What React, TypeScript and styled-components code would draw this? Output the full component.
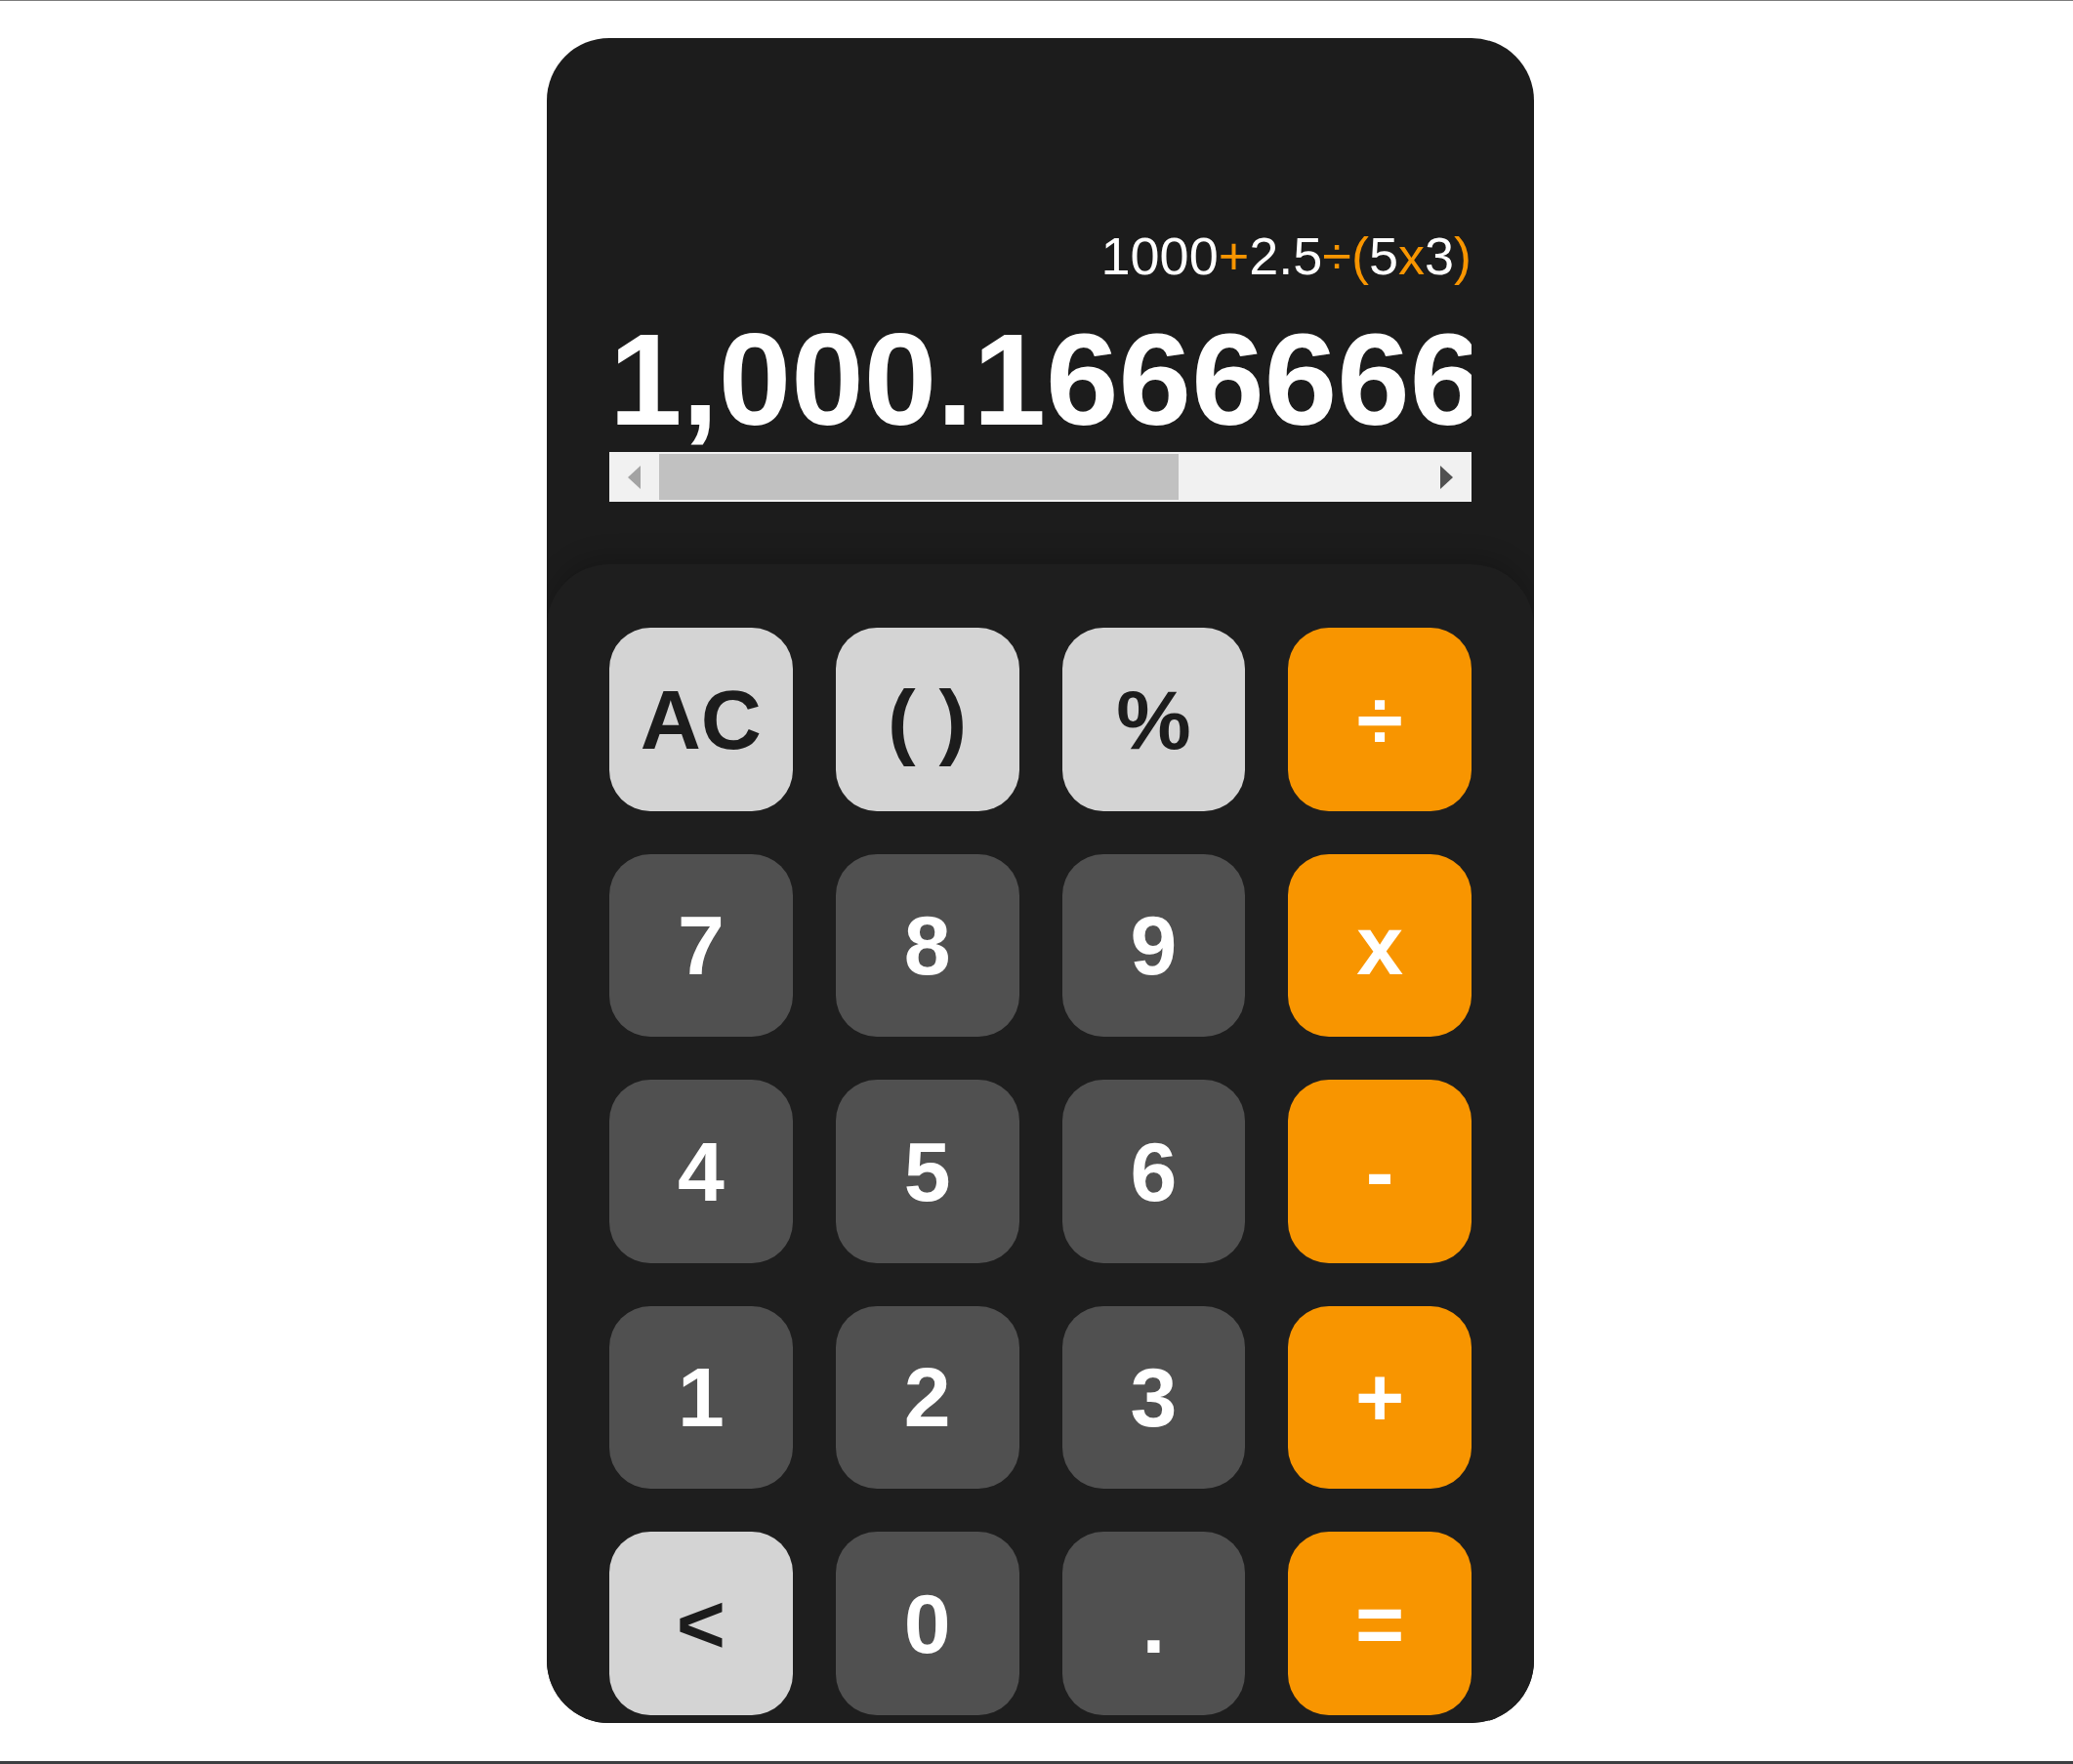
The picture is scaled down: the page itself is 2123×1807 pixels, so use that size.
import React from "react";
import styled, { createGlobalStyle } from "styled-components";

const GlobalStyle = createGlobalStyle`
  html, body {
    margin: 0;
    padding: 0;
    background: #ffffff;
  }
  body {
    font-family: "Liberation Sans", Arial, sans-serif;
  }
  * { box-sizing: border-box; }
`;

const Page = styled.div`
  min-height: 100vh;
  display: flex;
  justify-content: center;
  align-items: flex-start;
  padding: 38px 0 0 8px;
  border-top: 1px solid #7d7d7d;
  border-bottom: 3px solid #3c3f41;
`;

const Calculator = styled.div`
  width: 1011px;
  background: #1c1c1c;
  border-radius: 64px;
  overflow: hidden;
  display: flex;
  flex-direction: column;
`;

const Display = styled.div`
  display: flex;
  flex-direction: column;
  align-items: stretch;
  padding: 192px 64px 64px;
`;

const Expression = styled.div`
  font-family: "Liberation Sans", Arial, sans-serif;
  font-size: 54px;
  line-height: 62px;
  height: 62px;
  color: #ffffff;
  text-align: right;
  white-space: nowrap;
`;

const Op = styled.span`
  color: #f89500;
`;

const Result = styled.div`
  margin-top: 29px;
  font-family: "Liberation Sans", Arial, sans-serif;
  font-weight: 700;
  font-size: 134px;
  line-height: 134px;
  height: 134px;
  color: #ffffff;
  white-space: nowrap;
  overflow: hidden;
`;

const ScrollBar = styled.div`
  margin-top: 7px;
  height: 51px;
  display: flex;
  background: #f1f1f1;
`;

const ArrowBox = styled.div`
  width: 51px;
  flex: 0 0 51px;
  display: flex;
  align-items: center;
  justify-content: center;
`;

const Triangle = styled.div<{ $dir: "left" | "right"; $color: string }>`
  width: 0;
  height: 0;
  border-top: 12.5px solid transparent;
  border-bottom: 12.5px solid transparent;
  ${(p) =>
    p.$dir === "left"
      ? `border-right: 13px solid ${p.$color};`
      : `border-left: 13px solid ${p.$color};`}
`;

const Track = styled.div`
  flex: 1;
  padding: 2px 0;
  display: flex;
`;

const Thumb = styled.div`
  height: 100%;
  background: #c1c1c1;
`;

const Keypad = styled.div`
  background: #1e1e1e;
  border-radius: 64px 64px 0 0;
  box-shadow: 0 -8px 24px rgba(0, 0, 0, 0.18);
  padding: 65px 64px 8px;
  display: grid;
  grid-template-columns: repeat(4, 1fr);
  column-gap: 44px;
  row-gap: 43.75px;
`;

type Variant = "light" | "dark" | "accent";

const Key = styled.button<{ $variant: Variant }>`
  aspect-ratio: 1 / 1;
  width: 100%;
  border: none;
  border-radius: 42px;
  padding: 0;
  display: flex;
  align-items: center;
  justify-content: center;
  font-family: "Liberation Sans", Arial, sans-serif;
  font-weight: 700;
  font-size: 86px;
  line-height: 1;
  cursor: pointer;
  background: ${(p) =>
    p.$variant === "light" ? "#d4d4d4" : p.$variant === "accent" ? "#f89500" : "#505050"};
  color: ${(p) => (p.$variant === "light" ? "#1c1c1c" : "#ffffff")};
`;

const keys: { label: string; variant: Variant }[] = [
  { label: "AC", variant: "light" },
  { label: "( )", variant: "light" },
  { label: "%", variant: "light" },
  { label: "÷", variant: "accent" },
  { label: "7", variant: "dark" },
  { label: "8", variant: "dark" },
  { label: "9", variant: "dark" },
  { label: "x", variant: "accent" },
  { label: "4", variant: "dark" },
  { label: "5", variant: "dark" },
  { label: "6", variant: "dark" },
  { label: "-", variant: "accent" },
  { label: "1", variant: "dark" },
  { label: "2", variant: "dark" },
  { label: "3", variant: "dark" },
  { label: "+", variant: "accent" },
  { label: "<", variant: "light" },
  { label: "0", variant: "dark" },
  { label: ".", variant: "dark" },
  { label: "=", variant: "accent" },
];

export default function App() {
  const thumbRatio = 0.681;
  return (
    <>
      <GlobalStyle />
      <Page>
        <Calculator>
          <Display>
            <Expression>
              1000<Op>+</Op>2.5<Op>÷</Op>
              <Op>(</Op>5<Op>x</Op>3<Op>)</Op>
            </Expression>
            <Result>1,000.1666666666666</Result>
            <ScrollBar>
              <ArrowBox>
                <Triangle $dir="left" $color="#a3a3a3" />
              </ArrowBox>
              <Track>
                <Thumb style={{ width: `${thumbRatio * 100}%` }} />
              </Track>
              <ArrowBox>
                <Triangle $dir="right" $color="#505050" />
              </ArrowBox>
            </ScrollBar>
          </Display>
          <Keypad>
            {keys.map((k) => (
              <Key key={k.label} $variant={k.variant}>
                {k.label}
              </Key>
            ))}
          </Keypad>
        </Calculator>
      </Page>
    </>
  );
}
